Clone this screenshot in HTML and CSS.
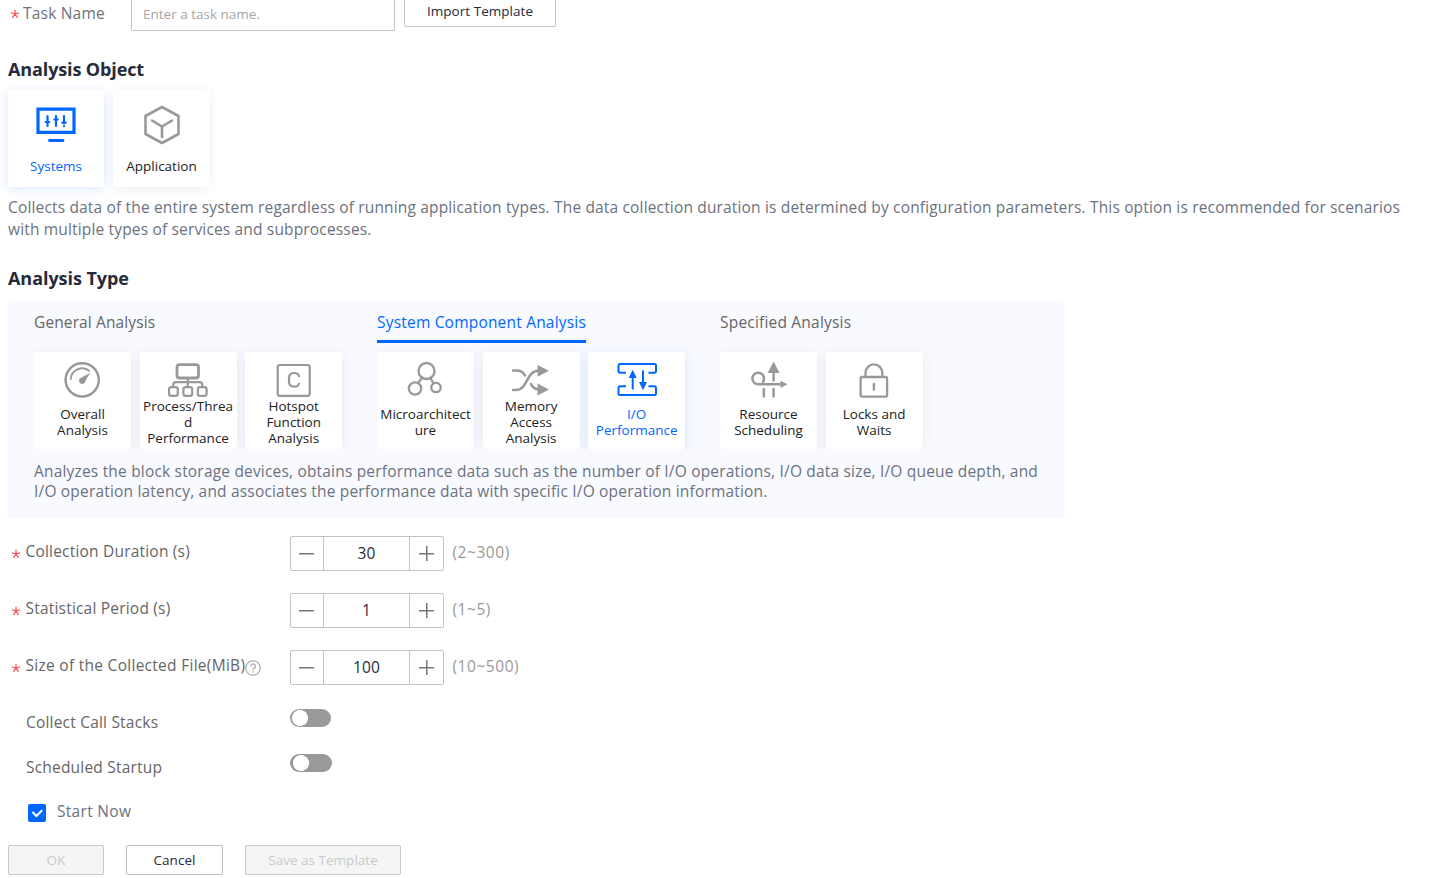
FILE: index.html
```html
<!DOCTYPE html>
<html lang="en">
<head>
<meta charset="utf-8">
<title>Create Analysis Task</title>
<link rel="stylesheet" href="styles.css">
</head>
<body>
<main class="page">
  <div class="task-row">
    <div class="task-label"><svg class="star" viewBox="0 0 10 10"><path d="M5 .8V5M5 5L.8 3.7M5 5l4.2-1.3M5 5L2.4 8.8M5 5l2.6 3.8"/></svg><span>Task Name</span></div>
    <div class="task-input"><span>Enter a task name.</span></div>
    <div class="import-btn"><span>Import Template</span></div>
  </div>

  <h2 class="heading object-heading">Analysis Object</h2>
  <div class="cards object-cards">
    <div class="card tall active">
      <svg class="icon" viewBox="0 0 40 40"><path d="M2 4.200h36v23.200H2z" stroke-width="3.200"/><path d="M13.500 35.500h13.500" stroke-width="2.800" stroke-linecap="round"/><path d="M11.500 11v10M20 11v10M28 11v7.500M28 21v.2M9.800 17h3.400M18.300 14.500h3.400M26.300 17.700h3.400" stroke-width="2.200" stroke-linecap="round"/></svg>
      <span class="card-text">Systems</span>
    </div>
    <div class="card tall">
      <svg class="icon" viewBox="0 0 40 40"><path d="M20 2l16.500 9v18L20 38 3.500 29V11z" stroke-width="2.600" stroke-linejoin="round"/><path d="M10 15.500l10 6 10-6M20 21.500V32" stroke-width="2.600" stroke-linecap="round"/></svg>
      <span class="card-text">Application</span>
    </div>
  </div>
  <p class="object-desc">Collects data of the entire system regardless of running application types. The data collection duration is determined by configuration parameters. This option is recommended for scenarios<br>with multiple types of services and subprocesses.</p>

  <h2 class="heading type-heading">Analysis Type</h2>
  <section class="panel">
    <div class="groups">
      <div class="group">
        <div class="tab tab-general"><span>General Analysis</span></div>
        <div class="cards">
          <div class="card">
            <svg class="icon" viewBox="0 0 40 40"><circle cx="19.200" cy="19.800" r="16.600" stroke-width="2.500"/><path d="M7.700 19.800A11.500 11.500 0 0 1 26.700 11.100" stroke-width="1.900"/><path class="solid" d="M27.200 12.800l-4.800 8.300a3.200 3.200 0 1 1-4.300-3.400z"/></svg>
            <span class="card-text">Overall<br>Analysis</span>
          </div>
          <div class="card">
            <svg class="icon" viewBox="0 0 40 40"><rect x="9" y="4.600" width="21.500" height="13.400" rx="2.500" stroke-width="2.800"/><path d="M19.800 18V27M5.200 27v-2q0-2.800 2.800-2.800h23.500q2.800 0 2.800 2.800v2" stroke-width="2.200"/><rect x="1" y="27.100" width="8.800" height="8.800" rx="2.200" stroke-width="2.200"/><rect x="15.400" y="27.100" width="8.800" height="8.800" rx="2.200" stroke-width="2.200"/><rect x="29.800" y="27.100" width="8.800" height="8.800" rx="2.200" stroke-width="2.200"/></svg>
            <span class="card-text">Process/Threa<br>d<br>Performance</span>
          </div>
          <div class="card">
            <svg class="icon" viewBox="0 0 40 40"><rect x="3.700" y="5" width="32" height="30.800" rx="2" stroke-width="2.200"/><path d="M25.200 16.800q-.6-3.800-4.800-3.800h-.4q-5 0-5 5v3.600q0 5 5 5h.4q4.200 0 4.800-3.800" stroke-width="2.200"/></svg>
            <span class="card-text">Hotspot<br>Function<br>Analysis</span>
          </div>
        </div>
      </div>
      <div class="group">
        <div class="tab tab-component selected"><span>System Component Analysis</span></div>
        <div class="cards">
          <div class="card">
            <svg class="icon" viewBox="0 0 40 40"><circle cx="20.500" cy="11" r="8" stroke-width="2.300"/><circle cx="9" cy="28.500" r="6.200" stroke-width="2.300"/><circle cx="30" cy="27.500" r="4.700" stroke-width="2.300"/><path d="M16 18l-4 5M24.500 18l3 5.500" stroke-width="2.300"/></svg>
            <span class="card-text">Microarchitect<br>ure</span>
          </div>
          <div class="card">
            <svg class="icon" viewBox="0 0 40 40"><path d="M2 10.500h3c5 0 7.500 1.500 9 5M2 30h3c12 0 10-19.500 23-19.500M20 24q2 5 8 5.500" stroke-width="2.500" stroke-linecap="round"/><path class="solid" d="M26.500 5l11.500 5.800L26.500 16.800zM26.500 23.500L38 29.500 26.500 35.500z"/></svg>
            <span class="card-text">Memory<br>Access<br>Analysis</span>
          </div>
          <div class="card active">
            <svg class="icon" viewBox="0 0 40 40"><path d="M9 12.700H3.200Q1.500 12.700 1.500 11V5.500Q1.500 4 3 4h34.500Q39 4 39 5.500V11q0 1.700-1.700 1.700H31.500M9 26.200H3.200q-1.700 0-1.700 1.700V33.500Q1.500 35 3 35h34.500Q39 35 39 33.500V27.900q0-1.700-1.700-1.700H31.500" stroke-width="2"/><path d="M15.700 14v15.600M26 10.500V26" stroke-width="2"/><path class="solid" d="M15.700 9.800l-4 8.200h8zM26 30.200l-4-8.200h8z"/></svg>
            <span class="card-text">I/O<br>Performance</span>
          </div>
        </div>
      </div>
      <div class="group">
        <div class="tab tab-specified"><span>Specified Analysis</span></div>
        <div class="cards">
          <div class="card">
            <svg class="icon" viewBox="0 0 40 40"><path d="M14 22Q15 20.500 15 18.500a5.800 5.800 0 1 0-5.800 5.800H34M24.600 12v8.500M14.800 29v7.500M24.600 29v7.500" stroke-width="2.500" stroke-linecap="round"/><path class="solid" d="M24.600 1.500l6 11.500h-12zM31.500 20.700l7 3.600-7 3.600z"/></svg>
            <span class="card-text">Resource<br>Scheduling</span>
          </div>
          <div class="card">
            <svg class="icon" viewBox="0 0 40 40"><rect x="6.600" y="17" width="26.500" height="19.600" rx="1.500" stroke-width="2.300"/><path d="M11.500 17v-4.200a8.400 8.400 0 0 1 16.800 0V17" stroke-width="2.300"/><path d="M19.900 24v5.500" stroke-width="2.400" stroke-linecap="round"/></svg>
            <span class="card-text">Locks and<br>Waits</span>
          </div>
        </div>
      </div>
    </div>
    <p class="panel-desc">Analyzes the block storage devices, obtains performance data such as the number of I/O operations, I/O data size, I/O queue depth, and<br>I/O operation latency, and associates the performance data with specific I/O operation information.</p>
  </section>

  <div class="field">
    <div class="field-label"><svg class="star" viewBox="0 0 10 10"><path d="M5 .8V5M5 5L.8 3.7M5 5l4.2-1.3M5 5L2.4 8.8M5 5l2.600 3.8"/></svg><span>Collection Duration (s)</span></div>
    <div class="stepper"><i class="step minus"></i><span class="value">30</span><i class="step plus"></i></div>
    <span class="range">(2~300)</span>
  </div>
  <div class="field">
    <div class="field-label"><svg class="star" viewBox="0 0 10 10"><path d="M5 .8V5M5 5L.8 3.7M5 5l4.2-1.3M5 5L2.4 8.8M5 5l2.600 3.8"/></svg><span>Statistical Period (s)</span></div>
    <div class="stepper"><i class="step minus"></i><span class="value">1</span><i class="step plus"></i></div>
    <span class="range">(1~5)</span>
  </div>
  <div class="field">
    <div class="field-label"><svg class="star" viewBox="0 0 10 10"><path d="M5 .8V5M5 5L.8 3.7M5 5l4.2-1.3M5 5L2.4 8.8M5 5l2.600 3.8"/></svg><span class="size-label">Size of the Collected File(MiB)</span><svg class="help" viewBox="0 0 16 16"><circle cx="8" cy="8" r="7.200"/><path d="M5.600 6.300a2.400 2.400 0 1 1 3.500 2.100Q8 9 8 10.200M8 11.300v1.300"/></svg></div>
    <div class="stepper"><i class="step minus"></i><span class="value">100</span><i class="step plus"></i></div>
    <span class="range">(10~500)</span>
  </div>
  <div class="switch-row"><span class="switch-label">Collect Call Stacks</span><span class="switch"></span></div>
  <div class="switch-row second"><span class="switch-label">Scheduled Startup</span><span class="switch wide"></span></div>
  <div class="check-row"><span class="checkbox"><svg viewBox="0 0 18 18"><path d="M4.500 8l3.900 4 5.800-5.700"/></svg></span><span class="check-label">Start Now</span></div>
  <div class="actions">
    <div class="btn disabled ok"><span>OK</span></div>
    <div class="btn cancel"><span>Cancel</span></div>
    <div class="btn disabled save"><span>Save as Template</span></div>
  </div>
</main>
</body>
</html>
```
FILE: styles.css
```css
* { box-sizing: border-box; }
body {
  margin: 0;
  background: #fff;
  color: #6c7280;
  font: 15.500px/20px "Open Sans", "Noto Sans", sans-serif;
  letter-spacing: 0.2px;
  white-space: nowrap;
  overflow: hidden;
}
.page { width: 1429px; height: 878px; padding-left: 8px; overflow: hidden; }
p, h2 { margin: 0; }

.task-row { display: flex; align-items: flex-start; height: 31px; }
.task-label { display: flex; align-items: center; width: 123px; padding: 3px 0 0 2px; }
.star { width: 10px; height: 10px; margin-right: 3px; fill: none; stroke: #ff4a50; stroke-width: 1.2; flex: none; }
.task-label .star { margin-top: 2px; }
.task-input {
  width: 264px; height: 31px; padding: 4px 11px; margin-right: 9px;
  border: 1px solid #c4c4c4; border-top: 0; border-radius: 0 0 2px 2px;
  color: #a6a6a6; font-size: 13.500px; letter-spacing: 0;
}
.import-btn {
  width: 152px; height: 27px; padding-top: 1px; text-align: center;
  border: 1px solid #c4c4c4; border-top: 0; border-radius: 0 0 2px 2px;
  color: #252b3a; font-size: 13.500px; letter-spacing: 0.04px;
}

.heading { color: #252b3a; font-size: 18px; line-height: 24px; font-weight: 700; letter-spacing: -0.05px; }
.object-heading { padding-top: 26px; height: 59px; letter-spacing: -0.12px; }
.cards { display: flex; gap: 8.600px; }
.card {
  display: flex; flex-direction: column; align-items: center;
  width: 97px; height: 97px; padding-top: 8px;
  background: #fff; border-radius: 2px; color: #222;
  box-shadow: 0 2px 12px rgba(0, 0, 0, 0.07);
}
.object-cards { gap: 9px; }
.object-cards .active { width: 96px; }
.card.active { color: #0067ff; box-shadow: 0 2px 12px rgba(0, 103, 255, 0.14); }
.icon { width: 40px; height: 40px; fill: none; stroke: #999; flex: none; }
.icon .solid { fill: #999; stroke: none; }
.active .icon { stroke: #0067ff; }
.active .icon .solid { fill: #0067ff; }
.card-text {
  display: grid; align-content: center;
  height: 48px; margin-top: -2px; text-align: center;
  font-size: 13.500px; line-height: 16px; letter-spacing: 0;
}
.card.tall { padding-top: 15px; }
.card.tall .card-text { height: 20px; margin-top: 11px; }

.object-desc { height: 75px; padding-top: 9px; line-height: 22px; letter-spacing: 0.162px; }
.type-heading { height: 39px; padding-top: 4px; }

.panel { width: 1056px; height: 217px; padding: 0 26px; background: #f8faff; }
.groups { display: flex; }
.group { width: 343px; flex: none; }
.tab { width: max-content; height: 42px; margin-bottom: 9px; padding-top: 11px; color: #666; }
.tab-general { letter-spacing: 0.12px; }
.tab.selected { color: #0067ff; border-bottom: 3px solid #0067ff; }
.group .cards { height: 97px; clip-path: inset(-12px -12px 0 0); }
.panel-desc { padding-top: 12px; letter-spacing: 0.185px; }

.field { display: flex; align-items: center; height: 35px; margin-bottom: 22px; }
.panel + .field { margin-top: 18px; }
.field-label { display: flex; align-items: center; width: 282px; padding-left: 3px; color: #666; }
.field-label .star { margin: 0 4.500px 0 0; }
.field-label span { margin-top: -5px; }
.field-label .size-label { letter-spacing: 0.28px; }
.help { width: 16px; height: 16px; margin: 0; fill: none; stroke: #aaa; stroke-width: 1.200; }
.stepper { display: flex; width: 154px; height: 35px; border: 1px solid #c4c4c4; border-radius: 2px; }
.step {
  width: 33px;
  background: linear-gradient(#777, #777) 8px center / 15px 1.500px no-repeat;
}
.minus { border-right: 1px solid #c4c4c4; }
.plus {
  width: 34px; border-left: 1px solid #c4c4c4;
  background: linear-gradient(#777, #777) center / 15px 1.500px no-repeat, linear-gradient(#777, #777) center / 1.500px 15px no-repeat;
}
.value { flex: 1; text-align: center; line-height: 33px; color: #252b3a; }
.range { margin: -3px 0 0 8.500px; color: #999; letter-spacing: 0.55px; }

.switch-row { display: flex; height: 45px; padding-left: 18px; color: #666; }
.switch-label { width: 264px; padding-top: 5px; }
.switch { width: 41px; height: 18px; margin-top: 2px; border-radius: 9px; background: radial-gradient(circle at 10px 9px, #fff 7.700px, #999 8.300px); }
.switch.wide { width: 42px; background: radial-gradient(circle at 11px 9px, #fff 7.700px, #999 8.300px); }
.check-row { display: flex; align-items: center; height: 20px; padding-left: 20px; margin-top: 5px; }
.checkbox { width: 18px; height: 18px; margin: 2px 11px 0 0; border-radius: 2px; background: #0067ff; }
.checkbox svg { display: block; fill: none; stroke: #fff; stroke-width: 2; }
.check-label { margin-top: -2px; letter-spacing: 0.3px; }
.actions { display: flex; margin-top: 23px; }
.btn {
  height: 30px; border: 1px solid #bfbfbf; border-radius: 2px;
  color: #252b3a; font-size: 13.500px; line-height: 28px; text-align: center; letter-spacing: 0.02px;
}
.disabled { color: #c9c9c9; background: #f5f5f5; border-color: #c9c9c9; }
.ok { width: 96px; margin-right: 22px; }
.cancel { width: 97px; margin-right: 22px; }
.save { width: 156px; }
```
